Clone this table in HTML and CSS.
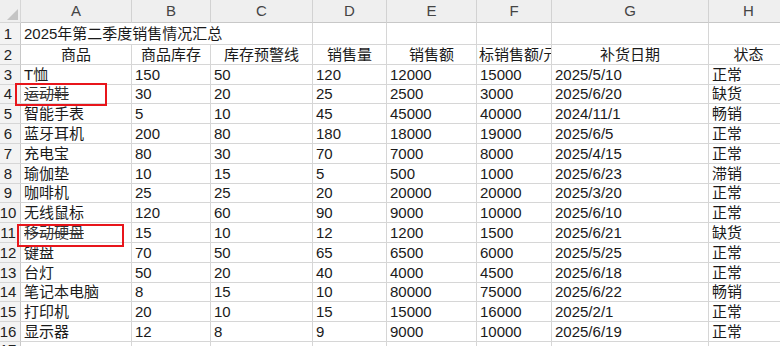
FILE: index.html
```html
<!DOCTYPE html>
<html lang="zh">
<head>
<meta charset="utf-8">
<link rel="stylesheet" href="styles.css">
</head>
<body>
<div class="sheet">
  <div class="grid">
    <div class="corner"><span class="tri"></span></div>
    <div class="col-h">A</div><div class="col-h">B</div><div class="col-h">C</div><div class="col-h">D</div><div class="col-h">E</div><div class="col-h">F</div><div class="col-h">G</div><div class="col-h">H</div><div class="col-h"></div>

    <div class="row-h">1</div>
    <div class="c title">2025年第二季度销售情况汇总</div><div class="c"></div><div class="c"></div><div class="c"></div><div class="c"></div><div class="c"></div><div class="c"></div>

    <div class="row-h">2</div>
    <div class="c ctr">商品</div><div class="c ctr">商品库存</div><div class="c ctr">库存预警线</div><div class="c ctr">销售量</div><div class="c ctr">销售额</div><div class="c clip"><span class="over">目标销售额/元</span></div><div class="c ctr">补货日期</div><div class="c ctr">状态</div><div class="c"></div>

    <div class="row-h">3</div>
    <div class="c">T恤</div><div class="c">150</div><div class="c">50</div><div class="c">120</div><div class="c">12000</div><div class="c">15000</div><div class="c">2025/5/10</div><div class="c">正常</div><div class="c"></div>

    <div class="row-h">4</div>
    <div class="c strike">运动鞋</div><div class="c">30</div><div class="c">20</div><div class="c">25</div><div class="c">2500</div><div class="c">3000</div><div class="c">2025/6/20</div><div class="c">缺货</div><div class="c"></div>

    <div class="row-h">5</div>
    <div class="c">智能手表</div><div class="c">5</div><div class="c">10</div><div class="c">45</div><div class="c">45000</div><div class="c">40000</div><div class="c">2024/11/1</div><div class="c">畅销</div><div class="c"></div>

    <div class="row-h">6</div>
    <div class="c">蓝牙耳机</div><div class="c">200</div><div class="c">80</div><div class="c">180</div><div class="c">18000</div><div class="c">19000</div><div class="c">2025/6/5</div><div class="c">正常</div><div class="c"></div>

    <div class="row-h">7</div>
    <div class="c">充电宝</div><div class="c">80</div><div class="c">30</div><div class="c">70</div><div class="c">7000</div><div class="c">8000</div><div class="c">2025/4/15</div><div class="c">正常</div><div class="c"></div>

    <div class="row-h">8</div>
    <div class="c">瑜伽垫</div><div class="c">10</div><div class="c">15</div><div class="c">5</div><div class="c">500</div><div class="c">1000</div><div class="c">2025/6/23</div><div class="c">滞销</div><div class="c"></div>

    <div class="row-h">9</div>
    <div class="c">咖啡机</div><div class="c">25</div><div class="c">25</div><div class="c">20</div><div class="c">20000</div><div class="c">20000</div><div class="c">2025/3/20</div><div class="c">正常</div><div class="c"></div>

    <div class="row-h">10</div>
    <div class="c">无线鼠标</div><div class="c">120</div><div class="c">60</div><div class="c">90</div><div class="c">9000</div><div class="c">10000</div><div class="c">2025/6/10</div><div class="c">正常</div><div class="c"></div>

    <div class="row-h">11</div>
    <div class="c strike">移动硬盘</div><div class="c">15</div><div class="c">10</div><div class="c">12</div><div class="c">1200</div><div class="c">1500</div><div class="c">2025/6/21</div><div class="c">缺货</div><div class="c"></div>

    <div class="row-h">12</div>
    <div class="c">键盘</div><div class="c">70</div><div class="c">50</div><div class="c">65</div><div class="c">6500</div><div class="c">6000</div><div class="c">2025/5/25</div><div class="c">正常</div><div class="c"></div>

    <div class="row-h">13</div>
    <div class="c">台灯</div><div class="c">50</div><div class="c">20</div><div class="c">40</div><div class="c">4000</div><div class="c">4500</div><div class="c">2025/6/18</div><div class="c">正常</div><div class="c"></div>

    <div class="row-h">14</div>
    <div class="c">笔记本电脑</div><div class="c">8</div><div class="c">15</div><div class="c">10</div><div class="c">80000</div><div class="c">75000</div><div class="c">2025/6/22</div><div class="c">畅销</div><div class="c"></div>

    <div class="row-h">15</div>
    <div class="c">打印机</div><div class="c">20</div><div class="c">10</div><div class="c">15</div><div class="c">15000</div><div class="c">16000</div><div class="c">2025/2/1</div><div class="c">正常</div><div class="c"></div>

    <div class="row-h">16</div>
    <div class="c">显示器</div><div class="c">12</div><div class="c">8</div><div class="c">9</div><div class="c">9000</div><div class="c">10000</div><div class="c">2025/6/19</div><div class="c">正常</div><div class="c"></div>

    <div class="row-h">17</div>
    <div class="c"></div><div class="c"></div><div class="c"></div><div class="c"></div><div class="c"></div><div class="c"></div><div class="c"></div><div class="c"></div><div class="c"></div>
  </div>
  <div class="mark mark-a"></div>
  <div class="mark mark-b"></div>
</div>
</body>
</html>
```
FILE: styles.css
```css
html, body {
  margin: 0;
  padding: 0;
  background: #ffffff;
  overflow: hidden;
}
.sheet {
  position: relative;
  width: 780px;
  height: 346px;
  overflow: hidden;
  font-family: "Liberation Sans", "Noto Sans CJK SC", sans-serif;
  font-size: 15px;
  color: #1a1a1a;
}
.grid {
  display: grid;
  grid-template-columns: 21px 111px 79px 102px 74px 90px 75px 157px 80px 40px;
  grid-template-rows: 22.5px 22.5px repeat(15, 19.8px);
  width: 829px;
}
.grid > div {
  box-sizing: border-box;
  border-right: 1px solid #d6d6d6;
  border-bottom: 1px solid #d6d6d6;
  overflow: hidden;
  white-space: nowrap;
  display: flex;
  align-items: center;
  line-height: 1;
}
.corner {
  background: #efefef;
  position: relative;
}
.tri {
  position: absolute;
  right: 2px;
  bottom: 2px;
  width: 0;
  height: 0;
  border-left: 11px solid transparent;
  border-bottom: 11px solid #c4c4c4;
}
.grid > .col-h {
  background: #efefef;
  justify-content: center;
  color: #444;
  border-bottom-color: #c8c8c8;
  border-right-color: #d2d2d2;
}
.grid > .row-h {
  background: #f3f3f3;
  justify-content: center;
  padding-right: 4px;
  color: #222;
  border-right-color: #c8c8c8;
}
.grid > .c {
  padding-left: 3px;
}
.grid > .title {
  grid-column: span 3;
}
.grid > .ctr {
  justify-content: center;
  padding-left: 0;
}
.grid > .clip {
  padding-left: 0;
}
.over {
  margin-left: -13px;
  flex: none;
}
.strike {
  text-decoration: line-through;
  text-decoration-thickness: 1px;
  color: #333;
}
.mark {
  position: absolute;
  box-sizing: border-box;
  border: 2px solid #e8151b;
}
.mark-a {
  left: 15px;
  top: 83px;
  width: 92px;
  height: 23px;
}
.mark-b {
  left: 17px;
  top: 224px;
  width: 107px;
  height: 23px;
}
```
